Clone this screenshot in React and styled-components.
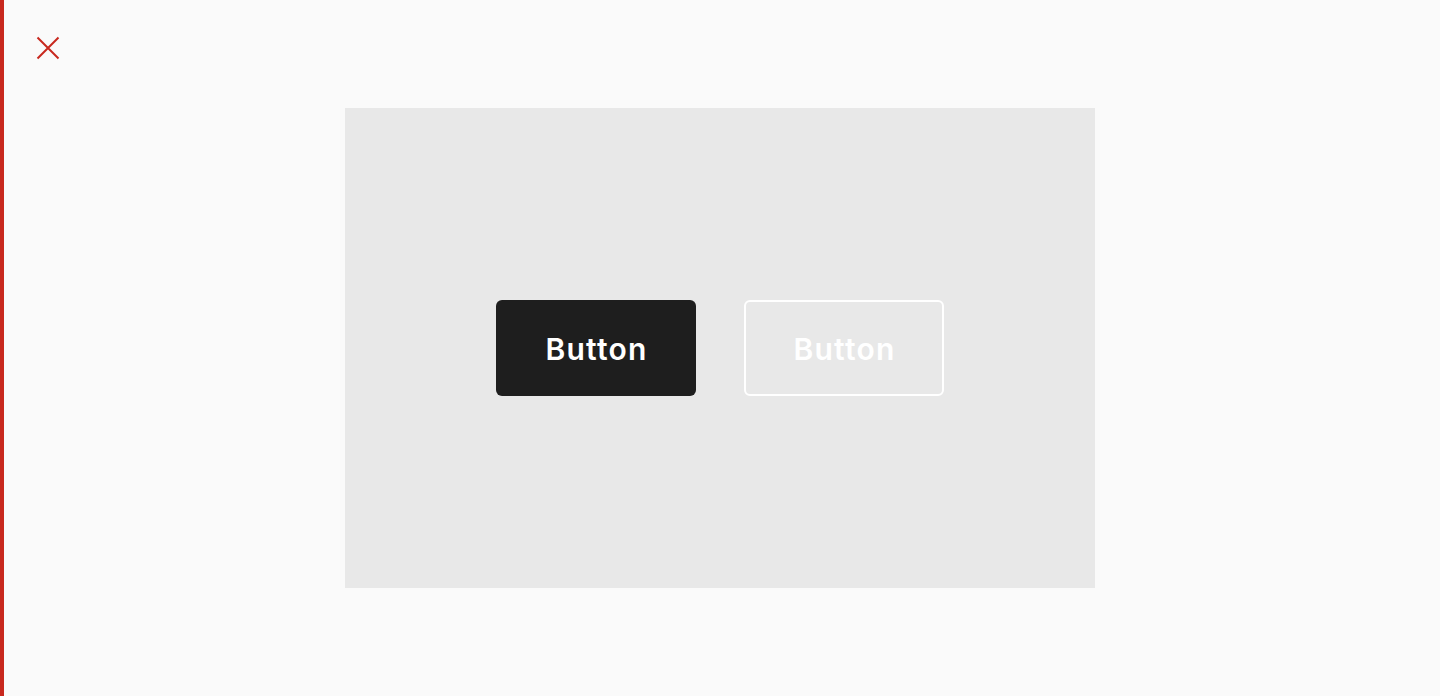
import React from "react";
import styled, { createGlobalStyle } from "styled-components";

const Global = createGlobalStyle`
  html, body { margin: 0; padding: 0; }
  body {
    min-height: 696px;
    background: linear-gradient(to right, #c8281e 0, #c8281e 4px, #fafafa 4px);
    font-family: Inter, "Open Sans", sans-serif;
  }
`;

const Page = styled.div`
  display: flex;
  flex-direction: column;
  min-height: 696px;
`;

const TopBar = styled.div`
  display: flex;
  padding: 36px 0 0 36px;
  height: 24px;
`;

const CloseButton = styled.button`
  display: flex;
  width: 24px;
  height: 24px;
  padding: 0;
  border: 0;
  background: none;
  cursor: pointer;
`;

const Stage = styled.div`
  display: flex;
  justify-content: center;
  margin-top: 48px;
`;

const Panel = styled.div`
  width: 750px;
  height: 480px;
  background: #e8e8e8;
  display: flex;
  align-items: center;
  justify-content: center;
  gap: 48px;
`;

const Button = styled.button`
  box-sizing: border-box;
  width: 200px;
  height: 96px;
  border-radius: 6px;
  font-family: Inter, "Open Sans", sans-serif;
  font-weight: 600;
  font-size: 30px;
  letter-spacing: 1.2px;
  color: #ffffff;
  cursor: pointer;
  background: ${(p) => (p.$variant === "outline" ? "transparent" : "#1e1e1e")};
  border: ${(p) => (p.$variant === "outline" ? "2px solid #ffffff" : "0")};
  padding: 2px 0 0 1px;
`;

export default function App() {
  return (
    <>
      <Global />
      <Page>
        <TopBar>
          <CloseButton aria-label="Close">
            <svg width="24" height="24" viewBox="0 0 24 24">
              <path d="M1.5 1.5 L22.5 22.5 M22.5 1.5 L1.5 22.5" stroke="#c8281e" strokeWidth="2" fill="none" />
            </svg>
          </CloseButton>
        </TopBar>
        <Stage>
          <Panel>
            <Button>Button</Button>
            <Button $variant="outline">Button</Button>
          </Panel>
        </Stage>
      </Page>
    </>
  );
}
